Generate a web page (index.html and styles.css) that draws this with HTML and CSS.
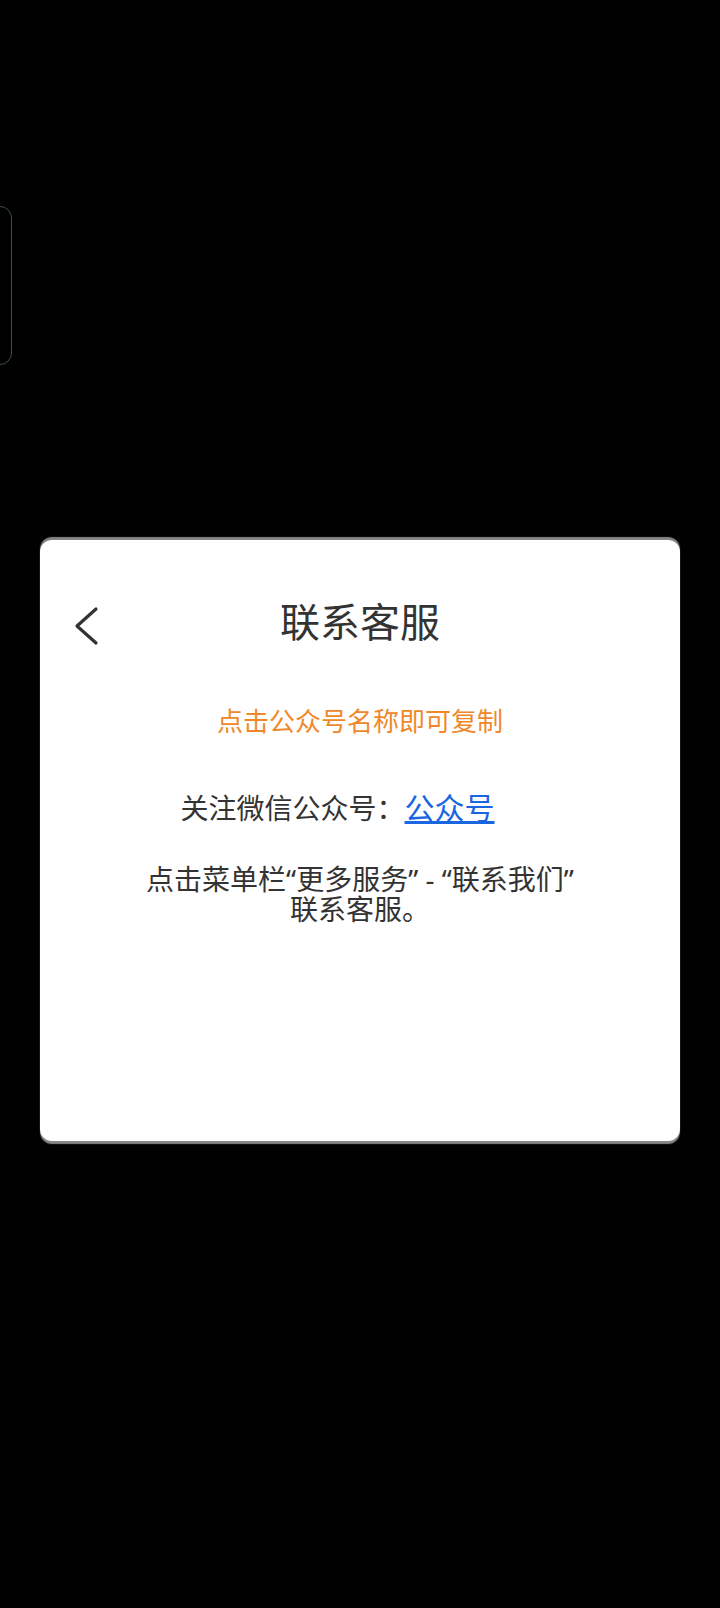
FILE: index.html
```html
<!DOCTYPE html>
<html lang="zh-CN">
<head>
    <meta charset="UTF-8">
    <meta name="viewport" content="width=device-width, initial-scale=1.0">
    <title>联系客服</title>
    <link rel="stylesheet" href="styles.css">
</head>
<body>
    <div class="side-handle"></div>

    <div class="page">
        <div class="dialog">
            <div class="dialog-header">
                <button class="back-button">
                    <svg viewBox="0 0 26 40">
                        <path d="M23 3 L4 20 L23 37"/>
                    </svg>
                </button>
                <h1 class="dialog-title">联系客服</h1>
                <span></span>
            </div>

            <p class="copy-hint">点击公众号名称即可复制</p>

            <p class="follow-line">关注微信公众号：<a class="account-link" href="#">公众号</a></p>

            <p class="menu-hint">
                <span class="menu-line">点击菜单栏“更多服务” - “联系我们”</span>
                <span class="menu-line">联系客服。</span>
            </p>
        </div>
    </div>
</body>
</html>
```

FILE: styles.css
```css
* {
    margin: 0;
    padding: 0;
    box-sizing: border-box;
}

body {
    font-family: "Noto Sans", "Noto Sans CJK SC", sans-serif;
    background: #000;
    min-height: 100vh;
    color: #333;
}

.side-handle {
    position: absolute;
    left: -20px;
    top: 206px;
    width: 32px;
    height: 159px;
    border: 1.5px solid #3a5444;
    border-radius: 12px;
}

.page {
    padding: 540px 40px 0;
}

.dialog {
    background: #fff;
    border-radius: 12px;
    height: 601px;
    padding-top: 57px;
    text-align: center;
    box-shadow: 0 -3px 1px rgba(150, 150, 150, 0.9), 0 3px 1px rgba(150, 150, 150, 0.9);
}

.dialog-header {
    display: grid;
    grid-template-columns: 1fr auto 1fr;
    align-items: center;
    height: 50px;
}

.back-button {
    justify-self: start;
    margin-left: 33px;
    margin-top: 8px;
    background: none;
    border: none;
    display: flex;
    cursor: pointer;
}

.back-button svg {
    width: 26px;
    height: 40px;
    fill: none;
    stroke: #333;
    stroke-width: 3.2;
    stroke-linecap: round;
    stroke-linejoin: round;
}

.dialog-title {
    font-size: 40px;
    font-weight: normal;
    line-height: 50px;
    color: #333;
}

.copy-hint {
    margin-top: 59px;
    font-size: 26px;
    line-height: 30px;
    color: #f0882a;
}

.follow-line {
    margin-top: 54px;
    padding-right: 45px;
    font-size: 28px;
    line-height: 36px;
}

.account-link {
    font-size: 30px;
    color: #1a66e0;
    text-decoration: underline;
}

.menu-hint {
    margin-top: 38px;
    display: flex;
    flex-direction: column;
    align-items: center;
    font-size: 28px;
}

.menu-line {
    display: block;
    height: 30px;
    line-height: 30px;
}
```
